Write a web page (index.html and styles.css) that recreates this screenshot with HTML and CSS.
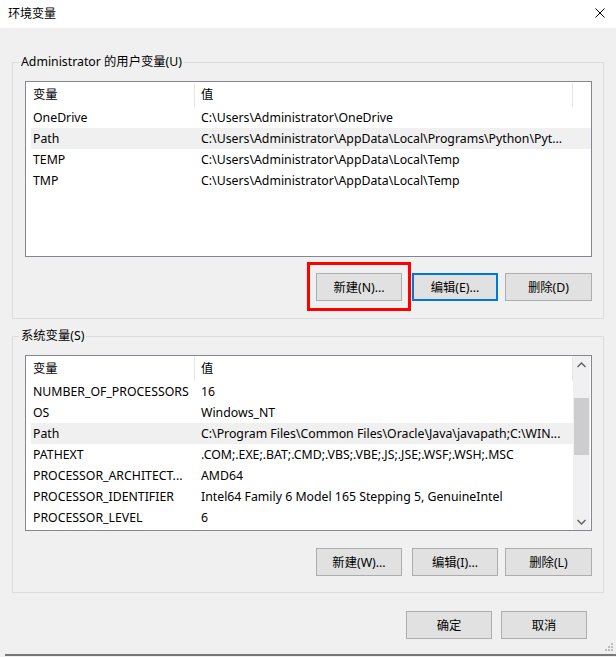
FILE: index.html
```html
<!DOCTYPE html>
<html lang="zh-CN">
<head>
  <meta charset="UTF-8" />
  <title>环境变量</title>
  <link rel="stylesheet" href="styles.css">
</head>
<body>

  <div class="window">

    <!-- Title bar -->
    <div class="titlebar">
      <span class="title">环境变量</span>
      <svg class="close" width="10" height="10" viewBox="0 0 10 10">
        <path d="M0.5 0.5 L9.5 9.5 M9.5 0.5 L0.5 9.5" stroke="#000" stroke-width="1" fill="none" />
      </svg>
    </div>

    <div class="content">

      <!-- User variables -->
      <fieldset class="group">
        <legend>Administrator 的用户变量(U)</legend>
        <div class="list">
          <div class="list-rows">
            <div class="row head">
              <div class="cell">变量</div>
              <div class="cell">值</div>
            </div>
            <div class="row">
              <div class="cell">OneDrive</div>
              <div class="cell">C:\Users\Administrator\OneDrive</div>
            </div>
            <div class="row selected">
              <div class="cell">Path</div>
              <div class="cell">C:\Users\Administrator\AppData\Local\Programs\Python\Pyt...</div>
            </div>
            <div class="row">
              <div class="cell">TEMP</div>
              <div class="cell">C:\Users\Administrator\AppData\Local\Temp</div>
            </div>
            <div class="row">
              <div class="cell">TMP</div>
              <div class="cell">C:\Users\Administrator\AppData\Local\Temp</div>
            </div>
          </div>
        </div>
        <div class="buttons">
          <button class="btn marked">新建(N)...</button>
          <button class="btn focused">编辑(E)...</button>
          <button class="btn">删除(D)</button>
        </div>
      </fieldset>

      <!-- System variables -->
      <fieldset class="group">
        <legend>系统变量(S)</legend>
        <div class="list">
          <div class="list-rows">
            <div class="row head">
              <div class="cell">变量</div>
              <div class="cell">值</div>
            </div>
            <div class="row">
              <div class="cell">NUMBER_OF_PROCESSORS</div>
              <div class="cell">16</div>
            </div>
            <div class="row">
              <div class="cell">OS</div>
              <div class="cell">Windows_NT</div>
            </div>
            <div class="row selected">
              <div class="cell">Path</div>
              <div class="cell">C:\Program Files\Common Files\Oracle\Java\javapath;C:\WIN...</div>
            </div>
            <div class="row">
              <div class="cell">PATHEXT</div>
              <div class="cell">.COM;.EXE;.BAT;.CMD;.VBS;.VBE;.JS;.JSE;.WSF;.WSH;.MSC</div>
            </div>
            <div class="row">
              <div class="cell">PROCESSOR_ARCHITECT...</div>
              <div class="cell">AMD64</div>
            </div>
            <div class="row">
              <div class="cell">PROCESSOR_IDENTIFIER</div>
              <div class="cell">Intel64 Family 6 Model 165 Stepping 5, GenuineIntel</div>
            </div>
            <div class="row">
              <div class="cell">PROCESSOR_LEVEL</div>
              <div class="cell">6</div>
            </div>
          </div>
          <div class="scrollbar">
            <div class="arrow">
              <svg width="9" height="6" viewBox="0 0 9 6"><path d="M0.5 5 L4.5 1 L8.5 5" stroke="#606060" stroke-width="1.4" fill="none" /></svg>
            </div>
            <div class="track">
              <div class="thumb"></div>
            </div>
            <div class="arrow">
              <svg width="9" height="6" viewBox="0 0 9 6"><path d="M0.5 1 L4.5 5 L8.5 1" stroke="#606060" stroke-width="1.4" fill="none" /></svg>
            </div>
          </div>
        </div>
        <div class="buttons">
          <button class="btn">新建(W)...</button>
          <button class="btn">编辑(I)...</button>
          <button class="btn">删除(L)</button>
        </div>
      </fieldset>

      <div class="dialog-buttons">
        <button class="btn">确定</button>
        <button class="btn">取消</button>
      </div>

    </div>

    <div class="bottom-edge"></div>

    <svg class="grip" width="10" height="10" viewBox="0 0 10 10">
      <rect x="7" y="1" width="2" height="2" fill="#bcbcbc" />
      <rect x="4" y="4" width="2" height="2" fill="#bcbcbc" />
      <rect x="7" y="4" width="2" height="2" fill="#bcbcbc" />
      <rect x="1" y="7" width="2" height="2" fill="#bcbcbc" />
      <rect x="4" y="7" width="2" height="2" fill="#bcbcbc" />
      <rect x="7" y="7" width="2" height="2" fill="#bcbcbc" />
    </svg>

  </div>

</body>
</html>
```

FILE: styles.css
```css
* {
  box-sizing: border-box;
}

body {
  margin: 0;
  font-family: 'Noto Sans', 'Noto Sans CJK SC', sans-serif;
  font-size: 12.3px;
  color: #000;
  background: #f0f0f0;
}

.window {
  position: relative;
  width: 616px;
  height: 657px;
  display: flex;
  flex-direction: column;
  background: #f0f0f0;
  overflow: hidden;
}

/* ---- title bar ---- */

.titlebar {
  height: 28px;
  background: #fff;
  display: flex;
  align-items: center;
  justify-content: space-between;
  padding: 0 11px 2px 8px;
}

.title {
  font-family: 'Noto Sans CJK SC', sans-serif;
  font-size: 12px;
  line-height: 16px;
}

.close {
  display: block;
}

/* ---- content ---- */

.content {
  padding: 26px 12px 0 12px;
}

.group {
  margin: 0 0 9px 0;
  padding: 0 11px 17px 12px;
  border: 1px solid #dcdcdc;
  min-width: 0;
}

.group + .group {
  padding-bottom: 16px;
}

.group legend {
  margin-left: -6px;
  padding: 0 2px;
  line-height: 16px;
}

.list {
  margin-top: 11px;
  height: 176px;
  border: 1px solid #828790;
  background: #fff;
  display: flex;
}

.list-rows {
  flex: 1;
  padding-left: 5px;
  min-width: 0;
}

.row {
  display: grid;
  grid-template-columns: 164px 378px;
  height: 21px;
  line-height: 21px;
  white-space: nowrap;
}

.row .cell {
  overflow: hidden;
  text-overflow: ellipsis;
  padding-left: 2px;
}

.row .cell + .cell {
  padding-left: 6px;
}

.row.head {
  height: 25px;
  line-height: 24px;
}

.row.head .cell {
  margin-top: 1px;
  border-right: 1px solid #e5e5e5;
}

.row.selected {
  background: #f0f0f0;
}

/* ---- scrollbar ---- */

.scrollbar {
  width: 17px;
  margin-right: 1px;
  background: #f0f0f0;
  display: flex;
  flex-direction: column;
}

.arrow {
  height: 17px;
  display: flex;
  align-items: center;
  justify-content: center;
}

.track {
  flex: 1;
  padding-top: 25px;
}

.thumb {
  height: 57px;
  margin: 0 1px;
  background: #cdcdcd;
}

/* ---- buttons ---- */

.buttons {
  display: flex;
  justify-content: flex-end;
  gap: 7px;
  margin-top: 16px;
}

.buttons .btn:first-child {
  margin-right: 3px;
}

.buttons .btn:last-child {
  width: 87px;
}

.group + .group .buttons {
  margin-top: 17px;
}

.btn {
  position: relative;
  width: 86px;
  height: 28px;
  padding: 0;
  font-family: 'Noto Sans', 'Noto Sans CJK SC', sans-serif;
  font-size: 12.3px;
  color: #000;
  background: #e1e1e1;
  border: 1px solid #adadad;
  border-radius: 0;
}

.btn.focused {
  border: 2px solid #0078d7;
}

/* red annotation box drawn over the screenshot */
.btn.marked::after {
  content: "";
  position: absolute;
  left: -10px;
  top: -12px;
  width: 104px;
  height: 49px;
  border: 3px solid #ff0000;
  box-sizing: border-box;
}

.dialog-buttons {
  display: flex;
  justify-content: flex-end;
  gap: 9px;
  margin-top: 18px;
  padding-right: 17px;
}

/* ---- window edge ---- */

.bottom-edge {
  margin-top: auto;
  margin-left: 5px;
  margin-bottom: 1px;
  height: 2px;
  background: #767676;
}

.grip {
  position: absolute;
  right: 2px;
  bottom: 5px;
}
```
